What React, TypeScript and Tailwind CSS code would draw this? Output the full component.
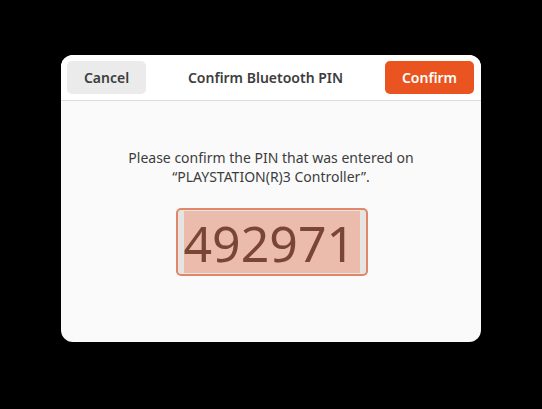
export default function App() {
  return (
    <div className="min-h-[409px] w-full bg-black pt-[55px]" style={{ fontFamily: '"Noto Sans", "Open Sans", sans-serif' }}>
      <div className="mx-auto flex h-[287px] w-[420px] flex-col overflow-hidden rounded-[12px] bg-[#fafafa]">
        {/* Header bar */}
        <div className="flex h-[46px] items-start justify-between border-b border-[#dcdcdc] bg-white px-[6px] pt-[6px]">
          <button className="h-[33px] w-[79px] rounded-[5px] bg-[#ebebeb] text-[14px] font-semibold text-[#3d3d3d]">
            Cancel
          </button>
          <span className="pt-[6px] text-[14px] font-semibold text-[#3d3d3d]">Confirm Bluetooth PIN</span>
          <button className="mr-px h-[33px] w-[89px] rounded-[5px] bg-[#e95420] text-[14px] font-semibold text-white">
            Confirm
          </button>
        </div>

        {/* Body */}
        <div className="flex flex-col items-center pt-[47px]">
          <p className="text-center text-[14px] leading-[19px] text-[#3d3d3d]">
            Please confirm the PIN that was entered on
            <br />
            “PLAYSTATION(R)3 Controller”.
          </p>
          <div className="mt-[22px] ml-[1px] flex h-[68px] w-[192px] rounded-[5px] border-2 border-[#e0876a] bg-[#e6e3e2] px-[6px] py-[1px]">
            <div className="flex flex-1 items-center bg-[#ebbcab] text-[50px] leading-none text-[#7b4535]">
              <span className="mt-[1px]">492971</span>
            </div>
          </div>
        </div>
      </div>
    </div>
  );
}
